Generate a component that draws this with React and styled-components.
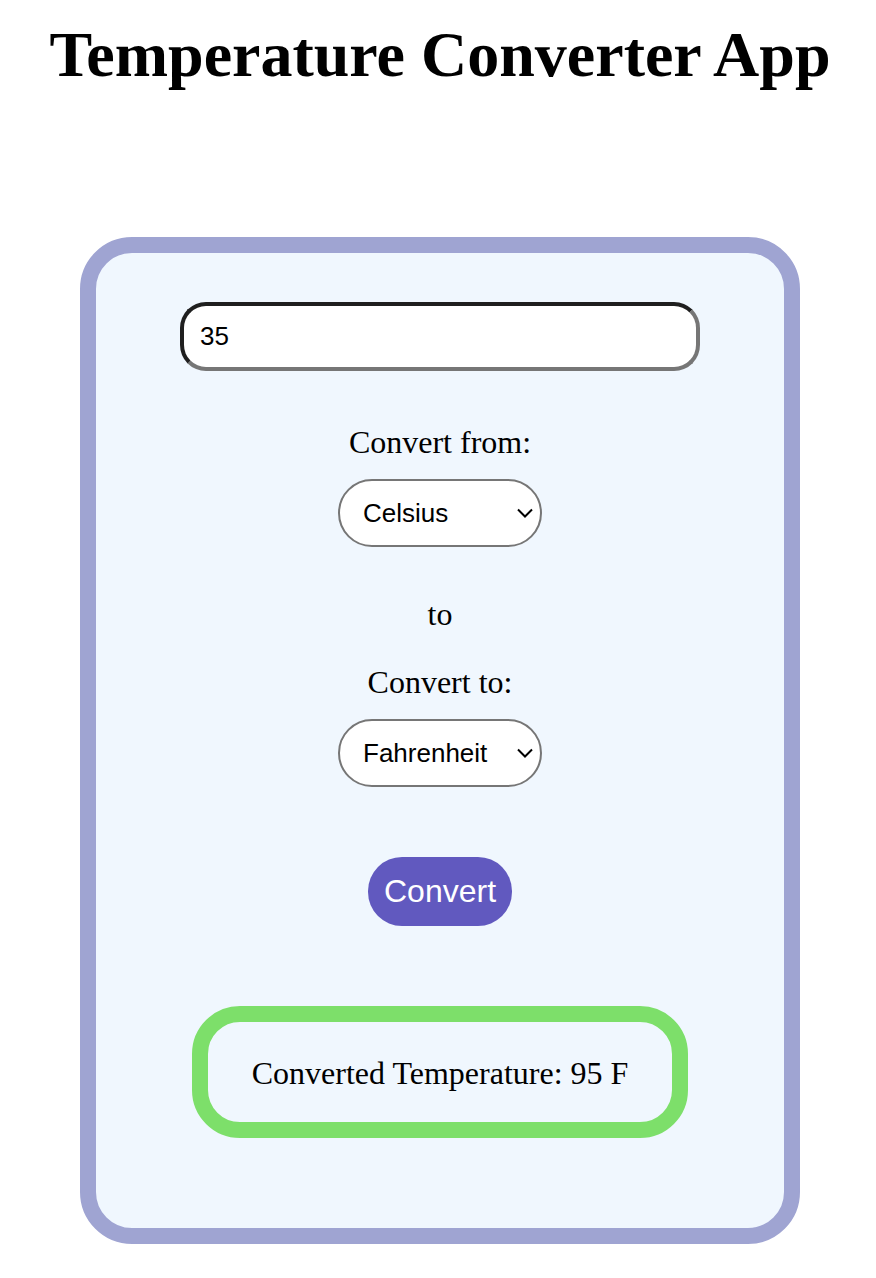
import { useState } from "react";
import styled, { createGlobalStyle } from "styled-components";

const GlobalStyle = createGlobalStyle`
  body {
    margin: 0;
    background: #ffffff;
    font-family: "Liberation Serif", "Times New Roman", serif;
    color: #000000;
  }
`;

const Page = styled.div`
  display: flex;
  flex-direction: column;
  align-items: center;
  padding-left: 4px;
  padding-bottom: 30px;
`;

const Title = styled.h1`
  margin: 18px 0 0;
  font-size: 64px;
  line-height: 74px;
  font-weight: bold;
  text-align: center;
`;

const Card = styled.div`
  box-sizing: border-box;
  width: 720px;
  margin-top: 145px;
  padding: 49px 0 90px;
  border: 16px solid #9fa4d2;
  border-radius: 52px;
  background-color: #f0f7fe;
  display: flex;
  flex-direction: column;
  align-items: center;
`;

const TempInput = styled.input`
  box-sizing: border-box;
  width: 520px;
  height: 69px;
  padding: 0 16px;
  border: 4px solid;
  border-color: #1f1f1f #767676 #767676 #1f1f1f;
  border-radius: 26px;
  background: #ffffff;
  font-family: "Liberation Sans", Arial, sans-serif;
  font-size: 26px;
  color: #000000;
  outline: none;
`;

const Label = styled.div`
  margin-top: ${props => props.$gap}px;
  font-size: 32px;
  line-height: 36px;
`;

const SelectWrap = styled.div`
  position: relative;
  margin-top: 19px;
  width: 204px;
  height: 68px;
`;

const Select = styled.select`
  appearance: none;
  -webkit-appearance: none;
  box-sizing: border-box;
  width: 100%;
  height: 100%;
  padding: 0 0 0 23px;
  border: 2px solid #767676;
  border-radius: 34px;
  background: #ffffff;
  font-family: "Liberation Sans", Arial, sans-serif;
  font-size: 26px;
  color: #000000;
  outline: none;
`;

const Chevron = styled.svg`
  position: absolute;
  right: 9px;
  top: 29px;
  width: 16px;
  height: 10px;
  pointer-events: none;
`;

const ConvertButton = styled.button`
  margin-top: 70px;
  width: 144px;
  height: 69px;
  padding: 0;
  border: none;
  border-radius: 34px;
  background-color: #6159bf;
  color: #ffffff;
  font-family: "Liberation Sans", Arial, sans-serif;
  font-size: 32px;
  cursor: pointer;
`;

const Result = styled.div`
  box-sizing: border-box;
  margin-top: 80px;
  width: 496px;
  height: 132px;
  border: 16px solid #7ddf6a;
  border-radius: 48px;
  display: flex;
  align-items: center;
  justify-content: center;
  font-size: 32px;
  line-height: 36px;
  padding-top: 2px;
`;

const UnitSelect = ({ value, onChange }) => (
  <SelectWrap>
    <Select value={value} onChange={e => onChange(e.target.value)}>
      <option value="C">Celsius</option>
      <option value="F">Fahrenheit</option>
      <option value="K">Kelvin</option>
    </Select>
    <Chevron viewBox="0 0 16 10">
      <path d="M1 1.5 L8 8.5 L15 1.5" fill="none" stroke="#000" strokeWidth="2" />
    </Chevron>
  </SelectWrap>
);

const toCelsius = (v, unit) => {
  if (unit === "F") return (v - 32) * 5 / 9;
  if (unit === "K") return v - 273.15;
  return v;
};

const fromCelsius = (c, unit) => {
  if (unit === "F") return c * 9 / 5 + 32;
  if (unit === "K") return c + 273.15;
  return c;
};

export default function App() {
  const [value, setValue] = useState("35");
  const [from, setFrom] = useState("C");
  const [to, setTo] = useState("F");
  const [result, setResult] = useState("95 F");

  const convert = () => {
    const n = parseFloat(value);
    if (isNaN(n)) return;
    const out = fromCelsius(toCelsius(n, from), to);
    setResult(`${Math.round(out * 100) / 100} ${to}`);
  };

  return (
    <>
      <GlobalStyle />
      <Page>
        <Title>Temperature Converter App</Title>
        <Card>
          <TempInput value={value} onChange={e => setValue(e.target.value)} />
          <Label $gap={53}>Convert from:</Label>
          <UnitSelect value={from} onChange={setFrom} />
          <Label $gap={49}>to</Label>
          <Label $gap={32}>Convert to:</Label>
          <UnitSelect value={to} onChange={setTo} />
          <ConvertButton onClick={convert}>Convert</ConvertButton>
          <Result>Converted Temperature: {result}</Result>
        </Card>
      </Page>
    </>
  );
}
